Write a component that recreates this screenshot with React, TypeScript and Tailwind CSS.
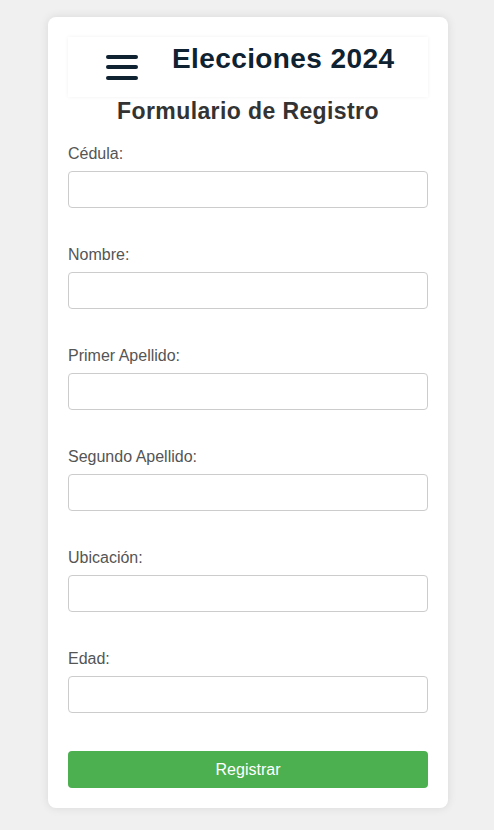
import React from "react";

const fields = ["Cédula:", "Nombre:", "Primer Apellido:", "Segundo Apellido:", "Ubicación:", "Edad:"];

export default function App() {
  return (
    <div className="min-h-[830px] bg-[#f0f0f0] pt-[17px] pb-[22px] font-['Liberation_Sans',Arial,sans-serif]">
      <div className="ml-[48px] w-[400px] rounded-[8px] bg-white p-[20px] shadow-[0_0_10px_rgba(0,0,0,0.1)]">
        <div className="flex h-[60px] items-center bg-white shadow-[0_0_4px_rgba(0,0,0,0.06)]">
          <div className="ml-[38px] flex flex-col gap-[6.5px]">
            <span className="block h-[4px] w-[32px] rounded-full bg-[#0f2231]" />
            <span className="block h-[4px] w-[32px] rounded-full bg-[#0f2231]" />
            <span className="block h-[4px] w-[32px] rounded-full bg-[#0f2231]" />
          </div>
          <h1 className="ml-[34px] -mt-[16px] text-[28px] font-bold leading-none tracking-[0.4px] text-[#0f2231]">Elecciones 2024</h1>
        </div>
        <h2 className="mt-[1px] text-center text-[23px] font-bold leading-[26px] tracking-[0.4px] text-[#333]">Formulario de Registro</h2>
        <div className="mt-[21px] flex flex-col">
          {fields.map((f) => (
            <div key={f} className="mb-[38px] flex flex-col">
              <label className="mb-[8px] block text-[16px] leading-[18px] text-[#555]">{f}</label>
              <input className="h-[37px] w-full rounded-[4px] border border-[#ccc] bg-white px-[8px] text-[16px] outline-none" />
            </div>
          ))}
          <button className="h-[37px] w-full rounded-[4px] bg-[#4caf50] text-[16px] text-white">Registrar</button>
        </div>
      </div>
    </div>
  );
}
